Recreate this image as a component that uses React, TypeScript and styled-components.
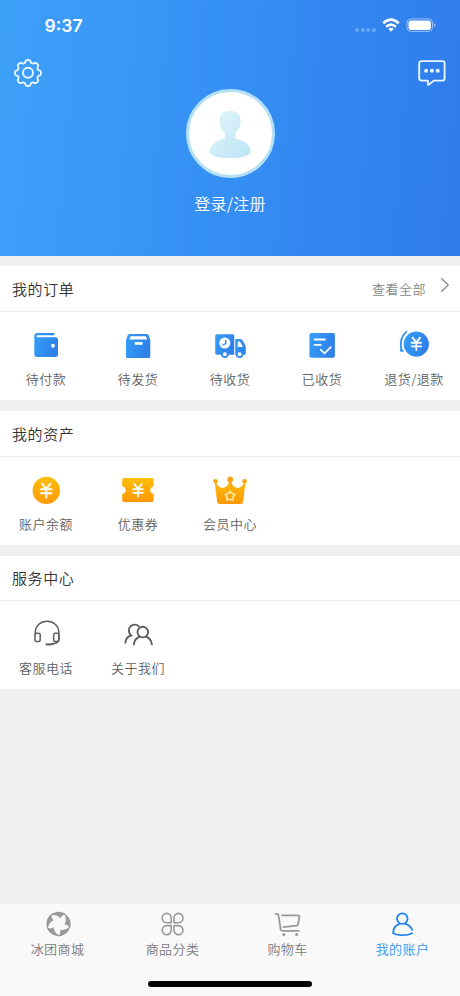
import React from "react";
import styled, { createGlobalStyle } from "styled-components";

const GlobalStyle = createGlobalStyle`
  * { box-sizing: border-box; }
  body { margin: 0; background: #f0f0f0; }
`;

const Screen = styled.div`
  display: flex;
  flex-direction: column;
  width: 460px;
  height: 996px;
  overflow: hidden;
  background: #f0f0f0;
  font-family: "Noto Sans CJK SC", sans-serif;
  font-weight: 350;
`;

const Header = styled.header`
  display: flex;
  flex-direction: column;
  height: 256px;
  flex: none;
  background: linear-gradient(95deg, #3da0f8 0%, #358ff3 50%, #2f7cec 100%);
  color: #fff;
`;

const StatusBar = styled.div`
  display: flex;
  justify-content: space-between;
  height: 50px;
  padding: 14px 24px 0 44.500px;
`;

const Clock = styled.span`
  font: 600 17.500px/24px Inter, sans-serif;
`;

const Actions = styled.div`
  display: flex;
  justify-content: space-between;
  height: 39px;
  padding: 8px 13px 0;
`;

const Avatar = styled.div`
  display: flex;
  align-items: center;
  justify-content: center;
  align-self: center;
  width: 89px;
  height: 89px;
  padding-top: 2px;
  border: 3px solid #b5e1f7;
  border-radius: 50%;
  background: #fff;
`;

const Login = styled.div`
  margin-top: 13px;
  text-align: center;
  font-size: 16px;
  line-height: 24px;
  letter-spacing: 0.2px;
`;

const Card = styled.section<{ $height: number; $gap: number }>`
  flex: none;
  height: ${(p) => p.$height}px;
  margin-top: ${(p) => p.$gap}px;
  background: #fff;
`;

const CardHead = styled.div<{ $height: number }>`
  display: flex;
  align-items: center;
  justify-content: space-between;
  height: ${(p) => p.$height}px;
  padding: 0 10px 0 12px;
  border-bottom: 1px solid #eee;
`;

const Title = styled.h2`
  margin: 0;
  font-size: 15px;
  line-height: 22px;
  font-weight: 350;
  letter-spacing: 0.6px;
  color: #333;
`;

const More = styled.div`
  display: flex;
  align-items: center;
  gap: 14px;
  font-size: 13px;
  line-height: 20px;
  letter-spacing: 0.5px;
  color: #858585;
`;

const Chevron = styled.svg`
  margin-top: -8px;
`;

const Grid = styled.div`
  display: grid;
  grid-template-columns: repeat(5, 92px);
  padding-top: 18px;
`;

const Entry = styled.div`
  display: flex;
  flex-direction: column;
  align-items: center;
  gap: 7px;
`;

const Label = styled.span`
  font-size: 13px;
  line-height: 20px;
  letter-spacing: 0.5px;
  white-space: nowrap;
  color: #5f5f5f;
`;

const TabBar = styled.nav`
  display: flex;
  flex-direction: column;
  align-items: center;
  height: 92px;
  flex: none;
  margin-top: auto;
  background: #f9f9f9;
`;

const Tabs = styled.div`
  display: grid;
  grid-template-columns: repeat(4, 115px);
  height: 77px;
  padding-top: 5px;
`;

const Tab = styled.div<{ $active?: boolean }>`
  display: flex;
  flex-direction: column;
  align-items: center;
  font-size: 13px;
  line-height: 20px;
  letter-spacing: 0.4px;
  color: ${(p) => (p.$active ? "#3595f5" : "#7a7a7a")};
`;

const HomeIndicator = styled.div`
  width: 164px;
  height: 6px;
  border-radius: 3px;
  background: #000;
`;

const Icon = ({ children }: { children: React.ReactNode }) => (
  <svg width="40" height="32" viewBox="0 0 40 32" fill="none">
    {children}
  </svg>
);

const TabIcon = ({ children }: { children: React.ReactNode }) => (
  <svg width="30" height="30" viewBox="0 0 30 30" fill="none">
    {children}
  </svg>
);

const GradientDefs = styled.svg`
  display: block;
`;

const Gradients = () => (
  <GradientDefs width="0" height="0">
    <defs>
      <linearGradient id="blue" x1="0" y1="0" x2="1" y2="0.35">
        <stop offset="0" stopColor="#35a0fa" />
        <stop offset="1" stopColor="#2f80e8" />
      </linearGradient>
      <linearGradient id="gold" x1="0" y1="0" x2="0" y2="1">
        <stop offset="0" stopColor="#fdbf09" />
        <stop offset="1" stopColor="#ff9808" />
      </linearGradient>
      <linearGradient id="crown" gradientUnits="userSpaceOnUse" x1="0" y1="1" x2="0" y2="29">
        <stop offset="0" stopColor="#f79a1c" />
        <stop offset=".4" stopColor="#fcb30d" />
        <stop offset="1" stopColor="#ff9808" />
      </linearGradient>
      <linearGradient id="person" x1="0" y1="0" x2="1" y2="1">
        <stop offset="0" stopColor="#e2f5f9" />
        <stop offset="1" stopColor="#bce4f6" />
      </linearGradient>
    </defs>
  </GradientDefs>
);

/* Scalloped gear outline with eight rounded teeth. */
const gearPath = (() => {
  const points: string[] = [];
  for (let i = 0; i <= 160; i++) {
    const a = (i / 160) * Math.PI * 2;
    const r = 11.7 + 1.3 * Math.tanh(1.8 * (Math.cos(8 * a) + 0.15));
    points.push(`${(15 + r * Math.cos(a)).toFixed(2)} ${(15 + r * Math.sin(a)).toFixed(2)}`);
  }
  return `M${points.join("L")}Z`;
})();

const GearIcon = () => (
  <svg width="30" height="30" viewBox="0 0 30 30" fill="none" stroke="#e6f5ff" strokeWidth="1.900" strokeLinejoin="round">
    <path d={gearPath} />
    <circle cx="15" cy="14.700" r="5" />
  </svg>
);

const MessageIcon = () => (
  <svg width="30" height="30" viewBox="0 0 30 30" fill="none">
    <path
      d="M5 3.100H25.400Q27.600 3.100 27.600 5.300V20.200Q27.600 22.600 25.400 22.600H17L11.700 26.700Q10.900 27 10.900 26.100V22.600H5Q2.200 22.600 2.200 20.200V5.300Q2.200 3.100 5 3.100Z"
      stroke="#e6f5ff"
      strokeWidth="1.900"
      strokeLinejoin="round"
    />
    <g fill="#e6f5ff">
      <circle cx="9.100" cy="12.800" r="2" />
      <circle cx="14.900" cy="12.800" r="2" />
      <circle cx="20.700" cy="12.800" r="2" />
    </g>
  </svg>
);

const StatusIcons = () => (
  <svg width="84" height="22" viewBox="0 0 84 22" fill="none">
    <g fill="#fff" fillOpacity=".27">
      <circle cx="5.200" cy="16" r="2" />
      <circle cx="10.800" cy="16" r="2" />
      <circle cx="16.400" cy="16" r="2" />
      <circle cx="22" cy="16" r="2" />
    </g>
    <g stroke="#fff" strokeWidth="2.600">
      <path d="M31.200 9.200Q39 2.200 46.800 9.200" />
      <path d="M34.100 12.700Q39 8.400 43.900 12.700" />
    </g>
    <path d="M36.300 14.900Q39 12.700 41.700 14.900L39 17.700Z" fill="#fff" />
    <rect x="54.900" y="4.900" width="25.600" height="12.500" rx="4" stroke="#fff" strokeOpacity=".5" />
    <rect x="56.500" y="6.400" width="22.400" height="9.500" rx="2.600" fill="#fff" />
    <path d="M81.900 9.200Q83.700 9.800 83.700 11.100T81.900 13Z" fill="#fff" fillOpacity=".5" />
  </svg>
);

const PersonIcon = () => (
  <svg width="42" height="50" viewBox="0 0 42 50" fill="none">
    <path
      d="M21 .8C28 .8 32 4.700 31.600 11.600C31.400 17 29 20.300 26.800 22.300C26.300 24.500 26.200 26.500 26.600 28.400C34 30.200 41.600 34 41.400 41.500C41.300 45.500 34.500 48.100 21 48.100S.7 45.500.6 41.500C.5 34 8.500 30.200 15.700 28.400C16 26.500 15.900 24.500 15.300 22.300C13 20.300 10.700 17 10.500 11.600C10.200 4.700 14 .8 21 .8Z"
      fill="url(#person)"
    />
  </svg>
);

const WalletIcon = () => (
  <Icon>
    <path d="M11.300 3H27.300Q28.700 3 28.700 4.100T27.600 5.300H12Q10.500 5.300 10.500 6.300T12 7.300H29.500Q32 7.300 32 9.600V24.300Q32 27 29.300 27H11.300Q8.300 27 8.300 24V6Q8.300 3 11.300 3Z" fill="url(#blue)" />
    <circle cx="27" cy="15.800" r="2" fill="#fff" />
  </Icon>
);

const BoxIcon = () => (
  <Icon>
    <path d="M12 4H28.500Q30 4 30.500 5.300L32.300 10V26.500Q32.300 27.900 30.900 27.900H9.400Q8 27.900 8 26.500V10L9.800 5.300Q10.300 4 12 4Z" fill="url(#blue)" />
    <path d="M12.700 6.200H27.800L29.300 9.600H11.300Z" fill="#fff" />
    <rect x="16.600" y="12" width="8" height="2.700" rx=".8" fill="#fff" />
  </Icon>
);

const TruckIcon = () => (
  <Icon>
    <path d="M6.800 4.300H22.700Q24.200 4.300 24.200 5.800V24.700H6.800Q5.200 24.700 5.200 23V5.800Q5.200 4.300 6.800 4.300Z" fill="url(#blue)" />
    <path d="M25.200 9H30.200Q31.500 9 32.200 10L34.700 14Q35.700 15.700 35.700 17.400V23.200Q35.700 24.700 34.200 24.700H25.200Z" fill="url(#blue)" />
    <path d="M27.800 11.500H29.200Q30 11.500 30.500 12.400L32.800 16.500V17H27.800Z" fill="#fff" />
    <circle cx="14.800" cy="13" r="5.500" fill="#fff" />
    <path d="M15.700 9.800V13.600L12.500 15.200" stroke="#3391f1" strokeWidth="1.500" />
    <g fill="#fff" stroke="#338bed" strokeWidth="1.800">
      <circle cx="14.800" cy="24.300" r="2.900" />
      <circle cx="29.600" cy="24.300" r="2.900" />
    </g>
  </Icon>
);

const ReceivedIcon = () => (
  <Icon>
    <rect x="7.400" y="3.100" width="25.500" height="24.600" rx="1.800" fill="url(#blue)" />
    <path d="M12.500 9.500H22.900M12.500 14.800H18.800M18.800 19.800L22.600 23.300L28.800 17.200" stroke="#fff" strokeWidth="1.800" strokeLinecap="round" />
  </Icon>
);

const Yen = ({ x, y, s = 1 }: { x: number; y: number; s?: number }) => (
  <path
    transform={`translate(${x} ${y}) scale(${s})`}
    d="M-4-6.300L0-1.400L4-6.300M-5-.9H5M-5 2.900H5M0-1.400V6.800"
    stroke="#fff"
    strokeWidth="1.900"
    strokeLinecap="round"
    strokeLinejoin="round"
  />
);

const RefundIcon = () => (
  <Icon>
    <path d="M12.300 1.800C7.200 6.500 6.200 12 7 17.500" stroke="#3391f1" strokeWidth="1.800" strokeLinecap="round" />
    <path d="M5.800 21L7 16L9.800 22Q7.500 22.200 5.800 21Z" fill="#3391f1" />
    <circle cx="22.300" cy="14.100" r="12.600" fill="url(#blue)" />
    <Yen x={22.3} y={13.6} s={0.95} />
  </Icon>
);

const CoinIcon = () => (
  <Icon>
    <circle cx="20.300" cy="15.400" r="13.700" fill="url(#gold)" />
    <Yen x={20.3} y={15.3} s={1.05} />
  </Icon>
);

const TicketIcon = () => (
  <Icon>
    <path d="M6 3H34Q35.700 3 35.700 4.700V11.500C31.200 11.500 31.200 18.800 35.700 18.800V25.300Q35.700 27 34 27H6Q4.200 27 4.200 25.300V18.800C9 18.800 9 11.500 4.200 11.500V4.700Q4.200 3 6 3Z" fill="url(#gold)" />
    <Yen x={20} y={15} s={0.95} />
  </Icon>
);

const CrownIcon = () => (
  <Icon>
    <g fill="url(#crown)">
      <circle cx="5.500" cy="6.200" r="2.300" />
      <circle cx="20.200" cy="4.500" r="2.900" />
      <circle cx="34.600" cy="6.200" r="2.300" />
      <path d="M4.700 7.500L6 7Q8.600 14 14.300 12.500Q18 11.500 19 6.500H21.400Q22.400 11.500 26 12.500Q31.700 14 34.300 7L35.500 7.500L33 27Q32.800 28.900 31 28.900H9.400Q7.500 28.900 7.200 27Z" />
    </g>
    <path
      d="M20 16.200L21.800 18.500L24.800 19.500L23.100 22L23.100 25.100L20 24.200L16.900 25.100L16.900 22L15.200 19.500L18.200 18.500Z"
      stroke="#ffe9ac"
      strokeWidth="1.500"
      strokeLinejoin="round"
    />
  </Icon>
);

const HeadsetIcon = () => (
  <Icon>
    <g stroke="#5f5f5f" strokeWidth="1.500" strokeLinecap="round">
      <path d="M9.200 16V13.900C9.200-1.500 32.900-1.500 32.900 13.900V20.500Q32 24.300 27 24.800" />
      <rect x="9" y="14.300" width="5.200" height="8.200" rx="1.500" />
      <rect x="27.700" y="14.300" width="5.200" height="8.200" rx="1.500" />
      <path d="M20.400 25.200Q24 25.700 27 24.800" strokeWidth="2" />
    </g>
  </Icon>
);

const UsersIcon = () => (
  <Icon>
    <g stroke="#5f5f5f" strokeWidth="1.900" strokeLinecap="round">
      <circle cx="24.800" cy="13.100" r="5.300" />
      <path d="M15.800 25.400C16.300 21.500 18.700 18.700 21.700 17.500M27.900 17.500C31 18.700 33.300 21.500 33.900 25.400" />
      <path d="M20.800 7.300C18.500 4.900 14.800 5.200 12.500 7.400C10 10 10.300 13.800 13.200 16.500Q8.100 17.500 7.300 23.700" />
    </g>
  </Icon>
);

const MallIcon = () => (
  <TabIcon>
    {[0, 72, 144, 216, 288].map((angle) => (
      <path
        key={angle}
        transform={`rotate(${angle} 15.500 15)`}
        d="M7.100 6.600C11.500 2 18.800 1.600 23.200 5.600C20.500 5.400 18.500 7 17.500 9.400C14.600 5.900 10.500 5.600 7.100 6.600Z"
        fill="#999"
      />
    ))}
  </TabIcon>
);

const CategoryIcon = () => (
  <TabIcon>
    <g stroke="#999" strokeWidth="1.600" strokeLinejoin="round">
      <path d="M13.200 13.800H8.700A4.500 4.700 0 1 1 13.200 9.100Z" />
      <path d="M16 13.800H20.400A4.500 4.700 0 1 0 16 9.100Z" />
      <path d="M13.200 16.600H8.700A4.500 4.600 0 1 0 13.200 21.100Z" />
      <path d="M16 16.600H20.400A4.500 4.600 0 1 1 16 21.100Z" />
    </g>
  </TabIcon>
);

const CartIcon = () => (
  <TabIcon>
    <path d="M2.600 4.900H4.200Q5.200 4.900 5.500 6.400L7.700 20.500Q8 21.900 9.600 21.900H25.700M9 6.300H24.800Q26.400 6.300 26.300 7.800L25.100 15.200Q24.800 16.500 23.500 16.600L10.500 18.200" stroke="#999" strokeWidth="1.800" strokeLinecap="round" strokeLinejoin="round" />
    <circle cx="10.800" cy="25.500" r="1.500" fill="#999" />
    <circle cx="23.600" cy="25.500" r="1.500" fill="#999" />
  </TabIcon>
);

const AccountIcon = () => (
  <TabIcon>
    <g stroke="#1f83f3" strokeWidth="1.800" strokeLinecap="round">
      <circle cx="14.300" cy="9.600" r="5.300" />
      <path d="M11.600 14.800C7.600 16 5.200 19.700 5.200 24.200Q9 26.300 14.700 26.200Q20.200 26.300 24 24.200M17 14.800C20.800 15.700 23.300 18 24.200 20.900" />
    </g>
  </TabIcon>
);

type Item = { label: string; icon: React.ComponentType };
type Group = { title: string; items: Item[]; height: number; head: number; gap: number; more?: string };

const groups: Group[] = [
  {
    title: "我的订单",
    more: "查看全部",
    height: 134,
    head: 46,
    gap: 10,
    items: [
      { label: "待付款", icon: WalletIcon },
      { label: "待发货", icon: BoxIcon },
      { label: "待收货", icon: TruckIcon },
      { label: "已收货", icon: ReceivedIcon },
      { label: "退货/退款", icon: RefundIcon },
    ],
  },
  {
    title: "我的资产",
    height: 134,
    head: 46,
    gap: 11,
    items: [
      { label: "账户余额", icon: CoinIcon },
      { label: "优惠券", icon: TicketIcon },
      { label: "会员中心", icon: CrownIcon },
    ],
  },
  {
    title: "服务中心",
    height: 133,
    head: 45,
    gap: 11,
    items: [
      { label: "客服电话", icon: HeadsetIcon },
      { label: "关于我们", icon: UsersIcon },
    ],
  },
];

const tabs: (Item & { active?: boolean })[] = [
  { label: "冰团商城", icon: MallIcon },
  { label: "商品分类", icon: CategoryIcon },
  { label: "购物车", icon: CartIcon },
  { label: "我的账户", icon: AccountIcon, active: true },
];

export default function App() {
  return (
    <Screen>
      <GlobalStyle />
      <Gradients />
      <Header>
        <StatusBar>
          <Clock>9:37</Clock>
          <StatusIcons />
        </StatusBar>
        <Actions>
          <GearIcon />
          <MessageIcon />
        </Actions>
        <Avatar>
          <PersonIcon />
        </Avatar>
        <Login>登录/注册</Login>
      </Header>
      {groups.map((group) => (
        <Card key={group.title} $height={group.height} $gap={group.gap}>
          <CardHead $height={group.head}>
            <Title>{group.title}</Title>
            {group.more && (
              <More>
                {group.more}
                <Chevron width="10" height="16" viewBox="0 0 10 16" fill="none">
                  <path d="M1.200 1.200L8.300 8L1.200 14.800" stroke="#858585" strokeWidth="1.200" />
                </Chevron>
              </More>
            )}
          </CardHead>
          <Grid>
            {group.items.map(({ label, icon: Glyph }) => (
              <Entry key={label}>
                <Glyph />
                <Label>{label}</Label>
              </Entry>
            ))}
          </Grid>
        </Card>
      ))}
      <TabBar>
        <Tabs>
          {tabs.map(({ label, icon: Glyph, active }) => (
            <Tab key={label} $active={active}>
              <Glyph />
              {label}
            </Tab>
          ))}
        </Tabs>
        <HomeIndicator />
      </TabBar>
    </Screen>
  );
}
